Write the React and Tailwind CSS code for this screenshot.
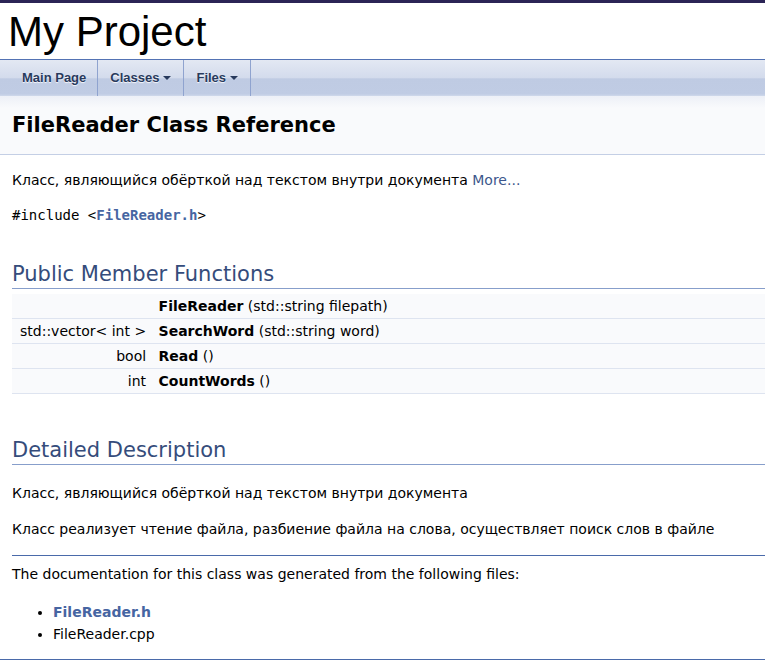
import React from 'react';

const members = [
	{ type: '', name: 'FileReader', args: ' (std::string filepath)' },
	{ type: 'std::vector< int >', name: 'SearchWord', args: ' (std::string word)' },
	{ type: 'bool', name: 'Read', args: ' ()' },
	{ type: 'int', name: 'CountWords', args: ' ()' },
];

function NavItem({ label, submenu }) {
	return (
		<li className="relative border-r border-[#8fa3cf]">
			<a
				href="#"
				className={`block h-[36px] leading-[36px] pl-[12px] text-[13px] font-bold text-[#283a5d] [text-shadow:0_1px_1px_rgba(255,255,255,0.9)] ${
					submenu ? 'pr-[24px]' : 'pr-[11px]'
				}`}>
				{label}
				{submenu && (
					<span className="absolute right-[12px] top-1/2 mt-[-2px] w-0 h-0 border-x-[4px] border-t-[4px] border-x-transparent border-t-[#283a5d]" />
				)}
			</a>
		</li>
	);
}

export default function App() {
	return (
		<div className="bg-white text-black min-h-[663px] font-['DejaVu_Sans',sans-serif]">
			{/* Window top edge */}
			<div className="h-[3px] bg-[#2b2456]" />

			{/* Title area */}
			<div className="h-[56px] pt-[5px] pl-[8px]">
				<div className="text-[42px] leading-[48px] font-['Liberation_Sans',Arial,sans-serif]">
					My Project
				</div>
			</div>

			{/* Tabs */}
			<nav className="border-t border-[#5373b4] h-[37px] bg-[linear-gradient(to_bottom,#e3e8f3_0%,#d3dbec_50%,#bfcbe3_52%,#c0cce4_94%,#d0d9eb_100%)] font-['Liberation_Sans',Arial,sans-serif]">
				<ul className="flex pl-[10px]">
					<NavItem label="Main Page" />
					<NavItem label="Classes" submenu />
					<NavItem label="Files" submenu />
				</ul>
			</nav>

			{/* Header */}
			<div className="bg-[linear-gradient(to_bottom,#edf0f7,#f9fafc_12px)] border-b border-[#c4cfe5] pt-[5px] pb-[5px] pl-[10px]">
				<div className="mx-[2px] my-[10px] text-[21px] leading-[28px] font-bold">
					FileReader Class Reference
				</div>
			</div>

			{/* Contents */}
			<div className="pl-[12px] text-[14px] leading-[20px]">
				<p className="mt-[15px]">
					Класс, являющийся обёрткой над текстом внутри документа{' '}
					<a href="#" className="text-[#3d578c]">
						More...
					</a>
				</p>

				<p className="mt-[15px] font-['DejaVu_Sans_Mono',monospace]">
					#include &lt;
					<a href="#" className="font-bold text-[#4665a2]">
						FileReader.h
					</a>
					&gt;
				</p>

				<h2 className="mt-[35px] text-[21px] leading-[28px] text-[#354c7b] border-b border-[#879ecb]">
					Public Member Functions
				</h2>

				<div className="mt-[5px] grid grid-cols-[auto_1fr]">
					{members.map((m) => (
						<React.Fragment key={m.name}>
							<div className="h-[25px] leading-[24px] bg-[#f9fafc] border-b border-[#dee4f0] pl-[8px] text-right whitespace-nowrap">
								{m.type}
								{'\u00a0'}
							</div>
							<div className="h-[25px] leading-[24px] bg-[#f9fafc] border-b border-[#dee4f0] pl-[8px] whitespace-nowrap">
								<b>{m.name}</b>
								{m.args}
							</div>
						</React.Fragment>
					))}
				</div>

				<h2 className="mt-[42px] h-[29px] text-[21px] leading-[28px] text-[#354c7b] border-b border-[#879ecb]">
					Detailed Description
				</h2>

				<p className="mt-[18px]">Класс, являющийся обёрткой над текстом внутри документа</p>
				<p className="mt-[16px]">
					Класс реализует чтение файла, разбиение файла на слова, осуществляет поиск слов в файле
				</p>

				<hr className="mt-[16px] border-0 border-t border-[#4a6aaa]" />

				<p className="mt-[8px]">The documentation for this class was generated from the following files:</p>
				<ul className="mt-[17px] list-disc pl-[41px] leading-[22px]">
					<li>
						<a href="#" className="font-bold text-[#4665a2]">
							FileReader.h
						</a>
					</li>
					<li>FileReader.cpp</li>
				</ul>
			</div>

			<hr className="mt-[14px] border-0 border-t border-[#4a6aaa]" />
		</div>
	);
}
